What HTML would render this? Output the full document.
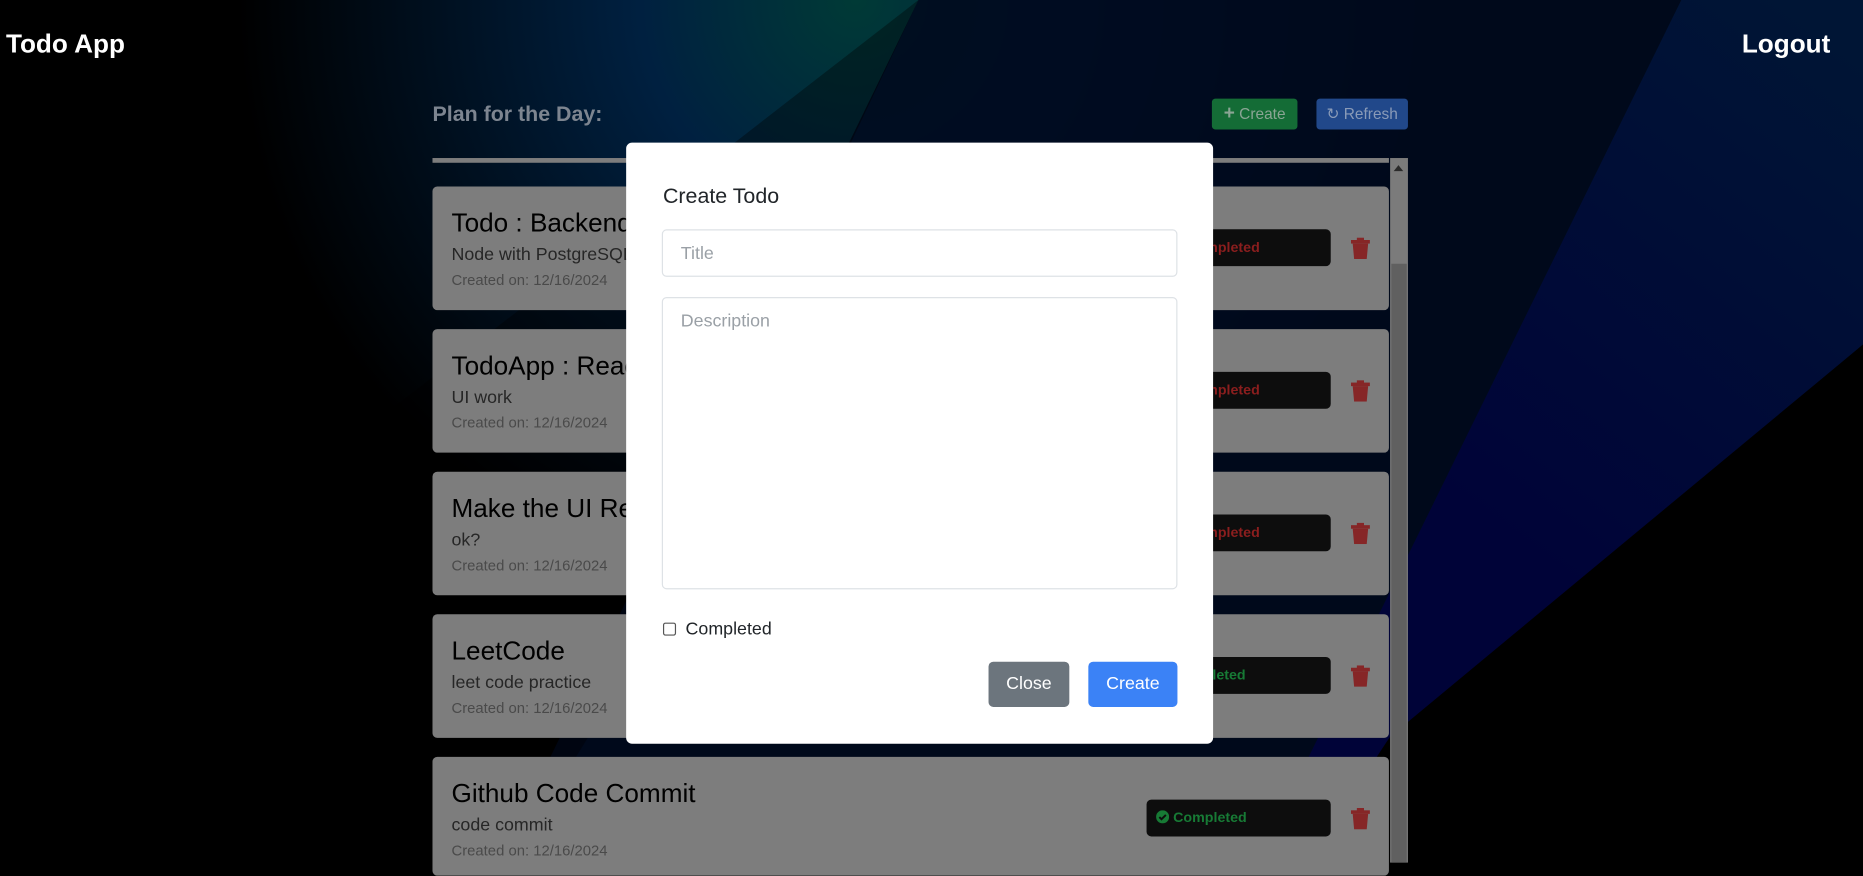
<!DOCTYPE html>
<html><head><meta charset="utf-8"><style>
html,body{margin:0;padding:0;width:1863px;height:863px;overflow:hidden;background:#000;font-family:"Liberation Sans",sans-serif}
#w{position:absolute;left:0;top:0;width:1568px;height:726px;transform:scale(1.18814);transform-origin:0 0}
.a{position:absolute}
*{box-sizing:border-box}
.card{position:absolute;left:364px;width:805px;height:104px;background:#7d7d7d;border-radius:4px}
.card .t{position:absolute;left:16px;top:18px;font-size:22px;color:#000;white-space:nowrap}
.card .d{position:absolute;left:16px;top:49px;font-size:15px;color:#262626}
.card .c{position:absolute;left:16px;top:72px;font-size:12.5px;color:#4a4a4a}
.pill{position:absolute;left:601px;top:36px;width:155px;height:31px;background:#0d0d0d;border-radius:4px;font-size:12px;font-weight:bold;line-height:31px;white-space:nowrap;overflow:hidden}
.trash{position:absolute;left:773px;top:43px}
</style></head><body><div id="w">
<svg class="a" style="left:0;top:0" width="1568" height="726">
<defs>
<radialGradient id="g1" cx="720" cy="0" r="520" gradientUnits="userSpaceOnUse"><stop offset="0" stop-color="#003a36"/><stop offset="0.35" stop-color="#002040"/><stop offset="1" stop-color="#000"/></radialGradient>
<linearGradient id="g2" x1="1500" y1="0" x2="1200" y2="400" gradientUnits="userSpaceOnUse"><stop offset="0" stop-color="#001535"/><stop offset="1" stop-color="#000338"/></linearGradient>
</defs>
<rect width="1568" height="726" fill="#000"/>
<rect width="1568" height="726" fill="url(#g1)"/>
<polygon points="773,0 1415,0 1060,726 420,726" fill="#000a1e" opacity="0.9"/>
<polygon points="1415,0 1568,0 1568,290 1170,640 1100,640" fill="url(#g2)"/>
<polygon points="1568,290 1568,726 1100,726 1170,620" fill="#000"/>
<polygon points="773,0 650,260 520,580 430,726 0,726 0,600" fill="#000" opacity="0.35"/>
</svg>
<div class="a" style="left:5px;top:24px;font-size:22px;font-weight:bold;color:#fff">Todo App</div>
<div class="a" style="left:1466px;top:24px;font-size:22px;font-weight:bold;color:#fff">Logout</div>
<div class="a" style="left:364px;top:86px;font-size:18px;font-weight:bold;color:#7d8590">Plan for the Day:</div>
<div class="a" style="left:1020px;top:83px;width:72px;height:26px;background:#146c36;border-radius:3px;color:#8aa594;font-size:13px;line-height:26px;text-align:center"><b style="font-size:16px">+</b> Create</div>
<div class="a" style="left:1108px;top:83px;width:77px;height:26px;background:#21488a;border-radius:3px;color:#8a9bb8;font-size:13px;line-height:26px;text-align:center">&#x21bb; Refresh</div>
<div class="a" style="left:364px;top:133px;width:805px;height:4px;background:#7d7d7d"></div>
<div class="a" style="left:1170px;top:133px;width:15px;height:593px;background:#7b7b7b"></div>
<div class="a" style="left:1171px;top:222px;width:13px;height:504px;background:#606060"></div>
<div class="a" style="left:1173px;top:139px;width:0;height:0;border-left:4px solid transparent;border-right:4px solid transparent;border-bottom:5px solid #2a2a2a"></div>

<div class="card" style="top:157px"><div class="t">Todo : Backend</div><div class="d">Node with PostgreSQL</div><div class="c">Created on: 12/16/2024</div><div class="pill" style="color:#8b1e1e;padding-left:10px">Not Completed</div><svg class="trash" width="16" height="18" viewBox="0 0 16 18"><rect x="0" y="2" width="16" height="3" fill="#862627"/><rect x="5" y="0" width="6" height="3" fill="#862627"/><path d="M1.5 5h13l-1.2 13h-10.6z" fill="#862627"/></svg></div>
<div class="card" style="top:277px"><div class="t">TodoApp : React</div><div class="d">UI work</div><div class="c">Created on: 12/16/2024</div><div class="pill" style="color:#8b1e1e;padding-left:10px">Not Completed</div><svg class="trash" width="16" height="18" viewBox="0 0 16 18"><rect x="0" y="2" width="16" height="3" fill="#862627"/><rect x="5" y="0" width="6" height="3" fill="#862627"/><path d="M1.5 5h13l-1.2 13h-10.6z" fill="#862627"/></svg></div>
<div class="card" style="top:397px"><div class="t">Make the UI Responsive</div><div class="d">ok?</div><div class="c">Created on: 12/16/2024</div><div class="pill" style="color:#8b1e1e;padding-left:10px">Not Completed</div><svg class="trash" width="16" height="18" viewBox="0 0 16 18"><rect x="0" y="2" width="16" height="3" fill="#862627"/><rect x="5" y="0" width="6" height="3" fill="#862627"/><path d="M1.5 5h13l-1.2 13h-10.6z" fill="#862627"/></svg></div>
<div class="card" style="top:517px"><div class="t">LeetCode</div><div class="d">leet code practice</div><div class="c">Created on: 12/16/2024</div><div class="pill" style="color:#177a35;padding-left:8px">&#10004; Completed</div><svg class="trash" width="16" height="18" viewBox="0 0 16 18"><rect x="0" y="2" width="16" height="3" fill="#862627"/><rect x="5" y="0" width="6" height="3" fill="#862627"/><path d="M1.5 5h13l-1.2 13h-10.6z" fill="#862627"/></svg></div>
<div class="card" style="top:637px;height:100px"><div class="t">Github Code Commit</div><div class="d">code commit</div><div class="c">Created on: 12/16/2024</div><div class="pill" style="color:#177a35;padding-left:8px"><svg width="11" height="11" viewBox="0 0 12 12" style="vertical-align:-1px"><circle cx="6" cy="6" r="6" fill="#177a35"/><path d="M3 6.2l2 2 4-4" stroke="#0d0d0d" stroke-width="1.8" fill="none"/></svg> Completed</div><svg class="trash" width="16" height="18" viewBox="0 0 16 18"><rect x="0" y="2" width="16" height="3" fill="#862627"/><rect x="5" y="0" width="6" height="3" fill="#862627"/><path d="M1.5 5h13l-1.2 13h-10.6z" fill="#862627"/></svg></div>

<div class="a" style="left:527px;top:120px;width:494px;height:506px;background:#fff;border-radius:5px">
<div class="a" style="left:31px;top:35px;font-size:18px;color:#212529">Create Todo</div>
<div class="a" style="left:30px;top:73px;width:434px;height:40px;border:1px solid #dee2e6;border-radius:4px"></div>
<div class="a" style="left:46px;top:85px;font-size:15px;color:#9aa0a6">Title</div>
<div class="a" style="left:30px;top:130px;width:434px;height:246px;border:1px solid #dee2e6;border-radius:4px"></div>
<div class="a" style="left:46px;top:142px;font-size:15px;color:#9aa0a6">Description</div>
<div class="a" style="left:31px;top:404px;width:11px;height:11px;border:1px solid #555;border-radius:2px"></div>
<div class="a" style="left:50px;top:401px;font-size:15px;color:#212529">Completed</div>
<div class="a" style="left:305px;top:437px;width:68px;height:38px;background:#6c757d;border-radius:4px;color:#fff;font-size:15px;line-height:38px;text-align:center">Close</div>
<div class="a" style="left:389px;top:437px;width:75px;height:38px;background:#3b82f6;border-radius:4px;color:#fff;font-size:15px;line-height:38px;text-align:center">Create</div>
</div>
</div></body></html>
